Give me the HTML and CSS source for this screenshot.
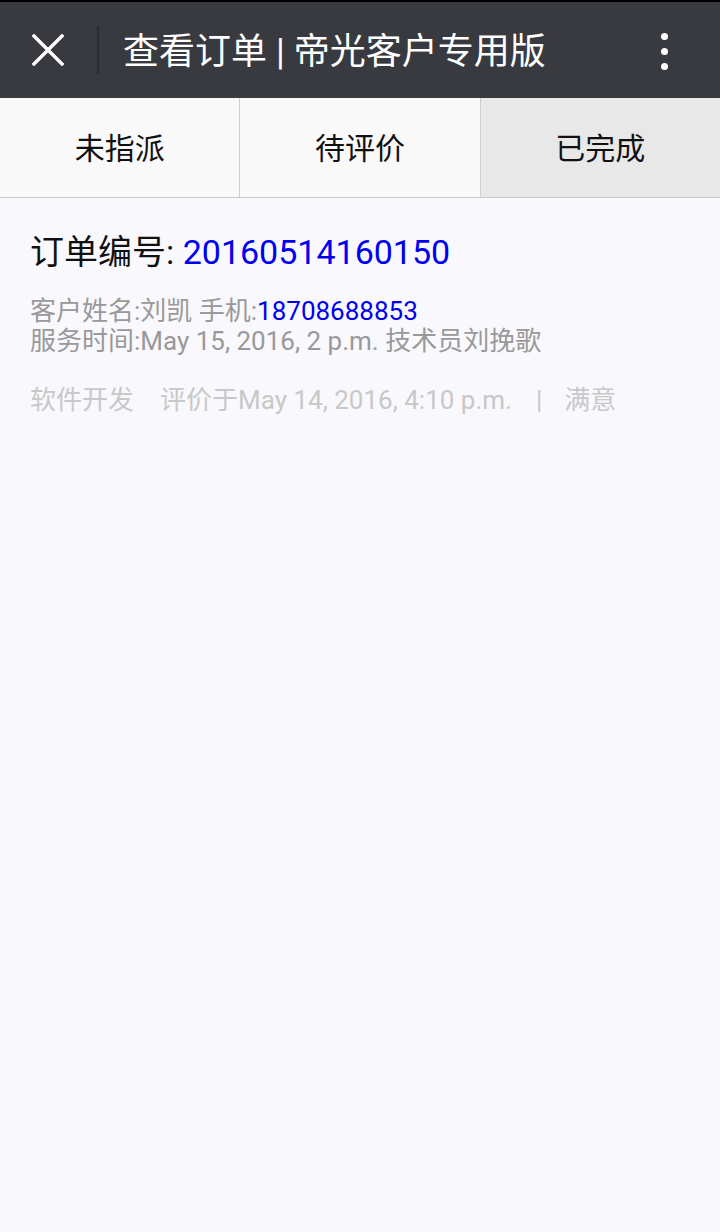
FILE: index.html
```html
<!DOCTYPE html>
<html lang="zh-CN">
<head>
<meta charset="utf-8">
<title>查看订单 | 帝光客户专用版</title>
<link rel="stylesheet" href="styles.css">
</head>
<body>
<div class="statusbar"></div>
<header class="topbar">
  <div class="close">
    <svg width="32" height="32" viewBox="0 0 32 32"><path d="M2 2 L30 30 M30 2 L2 30" stroke="#fff" stroke-width="3.4" stroke-linecap="square" fill="none"/></svg>
  </div>
  <div class="sep"></div>
  <h1 class="title">查看订单 | 帝光客户专用版</h1>
  <div class="more"><span></span><span></span><span></span></div>
</header>
<nav class="tabs">
  <div class="tab">未指派</div>
  <div class="tab">待评价</div>
  <div class="tab active">已完成</div>
</nav>
<main class="content">
  <div class="order">
    <div class="order-no">订单编号: <span class="blue">20160514160150</span></div>
    <div class="info">
      <div>客户姓名:刘凯 手机:<span class="blue">18708688853</span></div>
      <div>服务时间:May 15, 2016, 2 p.m. 技术员刘挽歌</div>
    </div>
    <div class="meta">
      <span class="cat">软件开发</span>
      <span class="eval">评价于May 14, 2016, 4:10 p.m.</span>
      <span class="bar">|</span>
      <span class="sat">满意</span>
    </div>
  </div>
</main>
</body>
</html>
```
FILE: styles.css
```css
html, body {
  margin: 0;
  padding: 0;
}
body {
  width: 720px;
  height: 1232px;
  background: #f9f8fd;
  font-family: Roboto, "Noto Sans CJK SC", sans-serif;
  overflow: hidden;
}
.statusbar {
  height: 2px;
  background: #000;
}
.topbar {
  height: 96px;
  background: #393a3f;
  display: flex;
  align-items: center;
}
.close {
  width: 97px;
  display: flex;
  justify-content: center;
  align-items: center;
  padding-right: 2px;
  box-sizing: border-box;
}
.close svg {
  display: block;
}
.sep {
  width: 2px;
  height: 48px;
  background: #2a2b2f;
}
.title {
  flex: 1;
  margin: 0 0 0 24px;
  padding-top: 4px;
  color: #fff;
  font-size: 36px;
  font-weight: normal;
  line-height: 40px;
  white-space: nowrap;
}
.more {
  width: 56px;
  display: flex;
  flex-direction: column;
  align-items: center;
  gap: 8px;
  margin-right: 28px;
  padding-top: 2px;
}
.more span {
  width: 7px;
  height: 7px;
  border-radius: 50%;
  background: #fff;
}
.tabs {
  display: flex;
  height: 99px;
  border-bottom: 1px solid #c8c8c8;
  background: #f9f9f9;
}
.tab {
  flex: 1;
  display: flex;
  align-items: center;
  justify-content: center;
  padding-bottom: 4px;
  font-size: 30px;
  color: #111;
  border-right: 1px solid #cfcfcf;
}
.tab:last-child {
  border-right: none;
}
.tab.active {
  background: #e8e8e8;
}
.content {
  padding: 30px 30px 0;
}
.order-no {
  font-size: 34px;
  line-height: 48px;
  color: #111;
}
.blue {
  color: #0000ee;
}
.info {
  margin-top: 20px;
  font-size: 26px;
  line-height: 30px;
  color: #999;
}
.meta {
  margin-top: 28px;
  font-size: 26px;
  line-height: 32px;
  color: #c8c8c8;
  display: flex;
  white-space: nowrap;
}
.eval {
  margin-left: 26px;
}
.bar {
  margin-left: 24px;
}
.sat {
  margin-left: 22px;
}
```
